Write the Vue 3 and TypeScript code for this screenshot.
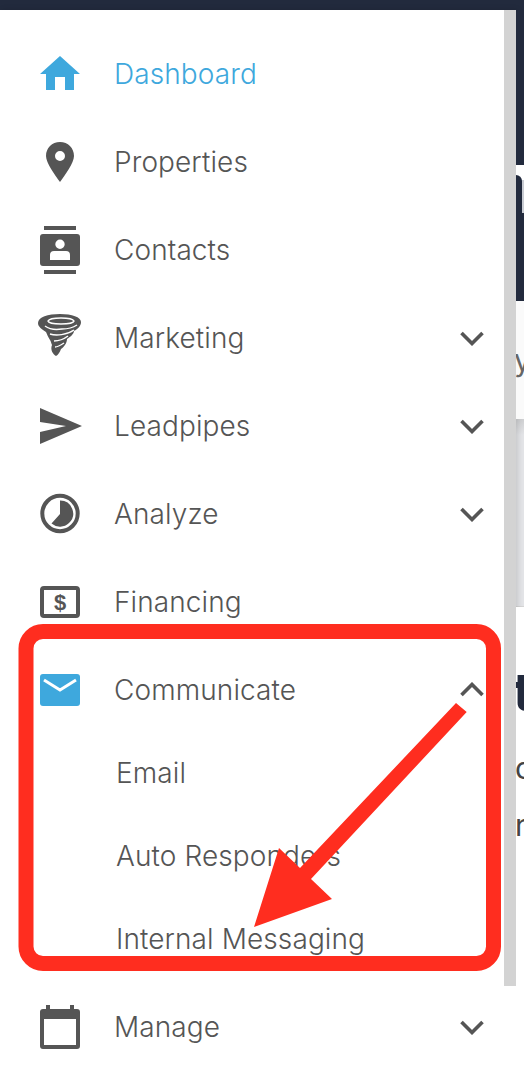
<script setup lang="ts">
interface Item { label: string; icon: string; chevron?: 'down' | 'up'; active?: boolean; children?: string[] }
const items: Item[] = [
  { label: 'Dashboard', icon: 'home', active: true },
  { label: 'Properties', icon: 'pin' },
  { label: 'Contacts', icon: 'contacts' },
  { label: 'Marketing', icon: 'tornado', chevron: 'down' },
  { label: 'Leadpipes', icon: 'send', chevron: 'down' },
  { label: 'Analyze', icon: 'clock', chevron: 'down' },
  { label: 'Financing', icon: 'money' },
  { label: 'Communicate', icon: 'mail', chevron: 'up', children: ['Email', 'Auto Responders', 'Internal Messaging'] },
  { label: 'Manage', icon: 'calendar', chevron: 'down' }
]
</script>

<template>
  <div class="page">
    <div class="topbar"></div>
    <div class="content">
      <nav class="sidebar">
        <template v-for="item in items" :key="item.label">
          <div class="row" :class="{ active: item.active }">
            <svg class="icon" width="40" height="40" viewBox="0 0 40 40" aria-hidden="true">
              <path v-if="item.icon === 'home'" fill="#3ea8dd" d="M20 3 40 21H34V37H25V24H15V37H6V21H0Z" />
              <path v-else-if="item.icon === 'pin'" fill="#555" fill-rule="evenodd" d="M20 1C28 1 34 7 34 15 34 22 25 34 20 41 15 34 6 22 6 15 6 7 12 1 20 1ZM20 10A5 5 0 1 0 20 20 5 5 0 1 0 20 10Z" />
              <g v-else-if="item.icon === 'contacts'" fill="#555">
                <rect x="4" y="-3" width="32" height="4" />
                <rect x="4" y="41" width="32" height="4" />
                <path fill-rule="evenodd" d="M3 5H37Q40 5 40 8V34Q40 37 37 37H3Q0 37 0 34V8Q0 5 3 5ZM20 10.500A4.700 4.700 0 1 0 20 19.900 4.700 4.700 0 1 0 20 10.500ZM10 31H30V26Q30 22 26 22H14Q10 22 10 26Z" />
              </g>
              <g v-else-if="item.icon === 'tornado'">
                <path fill="#555" d="M-2 6C-2 0 8-3 20-3 32-3 41 0 41 5 41 9 38 12 34 14 34 17 30 20 27 22 27 26 24 30 21 32 20 35 18 38 16 39 13 37 10 33 12 28 11 26 11 24 10 23 8 20 7 17 6 15 2 12-2 10-2 6Z" />
                <path fill="none" stroke="#fff" stroke-width="1.500" d="M5 9C9 12 16 13 22 12 29 12 34 10 37 8M8 4C10 0 32 0 34 4 33 8 9 8 8 4ZM10 17C16 19 27 18 34 13M14 24C18 24 24 22 28 19M15 30C18 30 21 28 24 26" />
              </g>
              <path v-else-if="item.icon === 'send'" fill="#555" d="M0 3 42 21 0 39V27L26 21 0 17Z" />
              <g v-else-if="item.icon === 'clock'">
                <circle cx="20" cy="20.500" r="17.700" fill="none" stroke="#555" stroke-width="4" />
                <path fill="#555" d="M20 7.500A13 13 0 0 1 29 30 13 13 0 0 1 11.500 30.500L20 21Z" />
              </g>
              <g v-else-if="item.icon === 'money'">
                <rect x="2" y="7" width="36" height="28" rx="2" fill="none" stroke="#555" stroke-width="4" />
                <text x="20" y="29" text-anchor="middle" class="dollar">$</text>
              </g>
              <g v-else-if="item.icon === 'mail'">
                <rect y="5" width="40" height="32" rx="3" fill="#3ea8dd" />
                <path fill="none" stroke="#fff" stroke-width="3" d="M4 11 20 21 36 11" />
              </g>
              <g v-else-if="item.icon === 'calendar'" fill="#555">
                <rect x="6" y="-1" width="4" height="6" />
                <rect x="30" y="-1" width="4" height="6" />
                <path fill-rule="evenodd" d="M3 3H37Q40 3 40 6V40Q40 43 37 43H3Q0 43 0 40V6Q0 3 3 3ZM4 13V39H36V13Z" />
              </g>
            </svg>
            <span class="label">{{ item.label }}</span>
            <svg v-if="item.chevron" class="chevron" :class="{ up: item.chevron === 'up' }" width="24" height="15" viewBox="0 0 24 15" aria-hidden="true">
              <path fill="none" stroke="#555" stroke-width="3.600" d="M1.500 2 12 12.500 22.500 2" />
            </svg>
          </div>
          <ul v-if="item.children" class="children">
            <li v-for="child in item.children" :key="child"><span class="child-label">{{ child }}</span></li>
          </ul>
        </template>
        <div class="scrollbar"></div>
      </nav>
      <aside class="peek">
        <div class="peek-hero"><div class="peek-corner"></div></div>
        <div class="peek-light"><span class="peek-y">y</span></div>
        <div class="peek-panel"></div>
        <div class="peek-text">
          <span class="peek-t">t</span>
          <span class="peek-c">c</span>
          <span class="peek-n">n</span>
        </div>
      </aside>
    </div>
    <svg class="annotation" width="524" height="1076" viewBox="0 0 524 1076" aria-hidden="true">
      <rect x="26" y="631.500" width="467.500" height="332" rx="17" fill="none" stroke="#ff2d1f" stroke-width="15" />
      <polygon fill="#ff2d1f" points="456,703 466.700,712 311,879 332,899 254,927 279,848 300,868" />
    </svg>
  </div>
</template>

<style>
html, body { margin: 0; padding: 0; background: #fff; }
</style>

<style scoped>
.page {
  position: relative;
  width: 524px;
  height: 1076px;
  overflow: hidden;
  background: #fff;
  font-family: Inter, Lato, sans-serif;
  color: #555;
}
.topbar { height: 10px; background: #222a3d; }
.content { display: flex; height: 1066px; }
.sidebar {
  position: relative;
  box-sizing: border-box;
  width: 516px;
  padding: 19px 0 0 40px;
  flex: none;
  background: #fff;
  box-shadow: 2px 0 6px rgba(0, 0, 0, 0.14);
}
.row { display: flex; align-items: center; height: 88px; }
.icon { flex: none; overflow: visible; }
.label { margin: 2px 0 0 34px; font-size: 28px; font-weight: 300; letter-spacing: 0.1px; }
.active .label { color: #3ea8dd; }
.chevron { margin: 2px 32px 0 auto; }
.chevron.up { margin-top: 0; transform: rotate(180deg); }
.children { margin: -3px 0 3px; padding: 0 0 0 76px; list-style: none; font-size: 28px; font-weight: 300; letter-spacing: 0.1px; }
.children li { display: flex; align-items: center; height: 83px; }
.child-label { margin-top: 2px; }
.dollar { font: 700 22px "Liberation Sans", sans-serif; fill: #555; }
.scrollbar { position: absolute; top: 0; right: 0; width: 12px; height: 976px; background: #d3d3d3; z-index: 1; }
.peek { flex: 1; display: flex; flex-direction: column; overflow: hidden; background: #fff; }
.peek-hero { position: relative; height: 291px; background: #222a3d; }
.peek-corner { position: absolute; left: 0; top: 155px; width: 8px; height: 48px; background: linear-gradient(#fff 0 15px, #c9ccd3 15px); }
.peek-corner::after { content: ""; position: absolute; left: 0; top: 10px; width: 6px; height: 38px; background: #222a3d; border-top-right-radius: 6px; }
.peek-light { height: 118px; background: #fafafa; position: relative; font-size: 30px; }
.peek-y { position: absolute; left: -2px; top: 44px; line-height: 30px; color: #666; }
.peek-panel { box-sizing: border-box; height: 188px; background: linear-gradient(#cfd0d2, #e4e5e8 16px); border-bottom: 1px solid #d6d6d6; }
.peek-text { position: relative; flex: 1; background: #fff; }
.peek-t { position: absolute; left: -3px; top: 60px; font-size: 54px; font-weight: 700; line-height: 50px; color: #222a3d; }
.peek-c { position: absolute; left: -1px; top: 146px; font-size: 30px; line-height: 30px; color: #444; }
.peek-n { position: absolute; left: -1px; top: 203px; font-size: 30px; line-height: 30px; color: #444; }
.annotation { position: absolute; left: 0; top: 0; pointer-events: none; z-index: 2; }
</style>
